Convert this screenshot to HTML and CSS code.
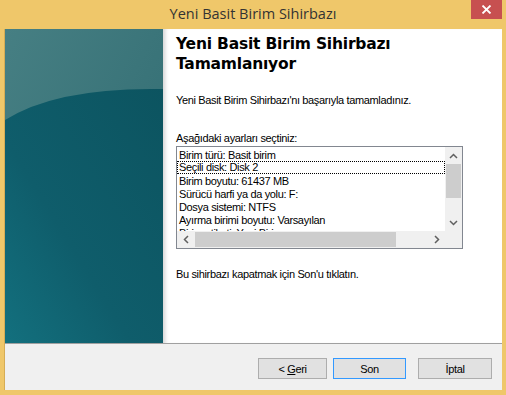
FILE: index.html
```html
<!DOCTYPE html>
<html lang="tr">
<head>
    <meta charset="UTF-8">
    <title>Yeni Basit Birim Sihirbazı</title>
    <link rel="stylesheet" href="styles.css">
</head>
<body>
    <div class="window">
        <div class="titlebar">
            <span></span>
            <div class="title">Yeni Basit Birim Sihirbazı</div>
            <button class="close" aria-label="Kapat">
                <svg width="11" height="9" viewBox="0 0 11 9"><path d="M1.5 0.5 L9.5 8.5 M9.5 0.5 L1.5 8.5" stroke="#fff" stroke-width="1.8"/></svg>
            </button>
        </div>

        <div class="client">
            <div class="main">
                <div class="side">
                    <svg width="158" height="314" viewBox="0 0 158 314" preserveAspectRatio="none">
                        <defs>
                            <linearGradient id="topg" x1="0" y1="0" x2="1" y2="1">
                                <stop offset="0" stop-color="#467f83"/>
                                <stop offset="1" stop-color="#2f6a70"/>
                            </linearGradient>
                            <linearGradient id="botg" x1="1" y1="0" x2="0" y2="1">
                                <stop offset="0" stop-color="#0c5460"/>
                                <stop offset="0.6" stop-color="#0f5d6b"/>
                                <stop offset="1" stop-color="#13707e"/>
                            </linearGradient>
                        </defs>
                        <rect width="158" height="314" fill="url(#topg)"/>
                        <path d="M0 91 Q52 58 158 60 L158 314 L0 314 Z" fill="url(#botg)"/>
                    </svg>
                </div>

                <div class="content">
                    <h1 class="heading">Yeni Basit Birim Sihirbazı Tamamlanıyor</h1>
                    <p class="intro">Yeni Basit Birim Sihirbazı'nı başarıyla tamamladınız.</p>
                    <p class="label">Aşağıdaki ayarları seçtiniz:</p>

                    <div class="listbox">
                        <div class="list-top">
                            <ul class="items">
                                <li>Birim türü: Basit birim</li>
                                <li class="focused">Seçili disk: Disk 2</li>
                                <li>Birim boyutu: 61437 MB</li>
                                <li>Sürücü harfi ya da yolu: F:</li>
                                <li>Dosya sistemi: NTFS</li>
                                <li>Ayırma birimi boyutu: Varsayılan</li>
                                <li>Birim etiketi: Yeni Birim</li>
                            </ul>
                            <div class="vscroll">
                                <div class="arrow">
                                    <svg width="9" height="6" viewBox="0 0 9 6"><polyline points="1,5 4.5,1.5 8,5" fill="none" stroke="#606060" stroke-width="1.5"/></svg>
                                </div>
                                <div class="vtrack"><div class="vthumb"></div></div>
                                <div class="arrow">
                                    <svg width="9" height="6" viewBox="0 0 9 6"><polyline points="1,1 4.5,4.5 8,1" fill="none" stroke="#606060" stroke-width="1.5"/></svg>
                                </div>
                            </div>
                        </div>
                        <div class="list-bottom">
                            <div class="hscroll">
                                <div class="arrow">
                                    <svg width="6" height="9" viewBox="0 0 6 9"><polyline points="5,1 1.5,4.5 5,8" fill="none" stroke="#606060" stroke-width="1.5"/></svg>
                                </div>
                                <div class="htrack"><div class="hthumb"></div></div>
                                <div class="arrow">
                                    <svg width="6" height="9" viewBox="0 0 6 9"><polyline points="1,1 4.5,4.5 1,8" fill="none" stroke="#606060" stroke-width="1.5"/></svg>
                                </div>
                            </div>
                            <div class="corner"></div>
                        </div>
                    </div>

                    <p class="outro">Bu sihirbazı kapatmak için Son'u tıklatın.</p>
                </div>
            </div>

            <div class="footer">
                <button class="btn btn-back">&lt; <u>G</u>eri</button>
                <button class="btn btn-default">Son</button>
                <button class="btn btn-cancel">İptal</button>
            </div>
        </div>
    </div>
</body>
</html>
```

FILE: styles.css
```css
body {
    margin: 0;
    font-family: 'Liberation Sans', Arial, sans-serif;
    font-size: 11px;
    letter-spacing: -0.35px;
    color: #000;
    background-color: #efc76a;
}
.window {
    width: 506px;
    height: 395px;
    display: flex;
    flex-direction: column;
    background-color: #efc76a;
}
.titlebar {
    height: 29px;
    display: grid;
    grid-template-columns: 1fr auto 1fr;
}
.title {
    font-family: 'Open Sans', 'Segoe UI', sans-serif;
    font-size: 14.5px;
    letter-spacing: 0;
    color: #333;
    line-height: 27px;
}
.close {
    justify-self: end;
    align-self: start;
    width: 31px;
    height: 19px;
    margin-right: 4px;
    padding: 0;
    border: none;
    background-color: #c75050;
    display: flex;
    align-items: center;
    justify-content: center;
}
.client {
    flex: 1;
    margin: 0 4px 5px 4px;
    border-left: 1px solid #d6ad55;
    display: flex;
    flex-direction: column;
    background-color: #f0f0f0;
}
.main {
    height: 314px;
    display: flex;
    border-bottom: 1px solid #a0a0a0;
}
.side {
    width: 158px;
    flex: none;
}
.side svg {
    display: block;
}
.content {
    flex: 1;
    background: #fff;
    box-shadow: inset 5px 0 4px -3px rgba(0,0,0,0.18);
    padding: 5px 0 0 13px;
}
.heading {
    margin: 0;
    width: 240px;
    font-family: 'DejaVu Sans', Verdana, sans-serif;
    font-weight: bold;
    font-size: 15.5px;
    line-height: 20px;
    letter-spacing: -0.2px;
}
.intro {
    margin: 20px 0 0;
    line-height: 13px;
}
.label {
    margin: 25px 0 0;
    line-height: 13px;
}
.listbox {
    margin-top: 1px;
    width: 285px;
    height: 101px;
    border: 1px solid #828790;
    display: flex;
    flex-direction: column;
}
.list-top {
    height: 84px;
    display: flex;
}
.items {
    flex: 1;
    margin: 0;
    padding: 1px 0 0;
    list-style: none;
    overflow: hidden;
}
.items li {
    height: 13px;
    line-height: 13px;
    padding-left: 2px;
    white-space: nowrap;
    box-sizing: border-box;
    border: 1px solid transparent;
    border-left: none;
    border-right: none;
}
.items li.focused {
    border: 1px dotted #000;
    line-height: 11px;
    padding-left: 1px;
}
.vscroll {
    width: 17px;
    display: flex;
    flex-direction: column;
    background: #f0f0f0;
}
.arrow {
    width: 17px;
    height: 17px;
    display: flex;
    align-items: center;
    justify-content: center;
    flex: none;
}
.vtrack {
    flex: 1;
}
.vthumb {
    width: 15px;
    height: 34px;
    margin-left: 1px;
    background: #cdcdcd;
}
.list-bottom {
    height: 17px;
    display: flex;
}
.hscroll {
    flex: 1;
    display: flex;
    background: #f0f0f0;
}
.htrack {
    flex: 1;
    padding-top: 1px;
}
.hthumb {
    width: 201px;
    height: 15px;
    margin-left: 1px;
    background: #cdcdcd;
}
.corner {
    width: 17px;
    background: #f0f0f0;
}
.outro {
    margin: 19px 0 0;
    line-height: 13px;
}
.footer {
    flex: 1;
    display: flex;
    justify-content: flex-end;
    align-items: flex-start;
    padding: 14px 10px 0 0;
}
.btn {
    height: 21px;
    padding: 0;
    font-family: 'Liberation Sans', Arial, sans-serif;
    font-size: 11px;
    letter-spacing: -0.35px;
    color: #000;
    background: #e1e1e1;
    border: 1px solid #adadad;
}
.btn-back {
    width: 69px;
}
.btn-default {
    width: 73px;
    margin-left: 6px;
    border-color: #3399ff;
}
.btn-cancel {
    width: 74px;
    margin-left: 12px;
}
```
